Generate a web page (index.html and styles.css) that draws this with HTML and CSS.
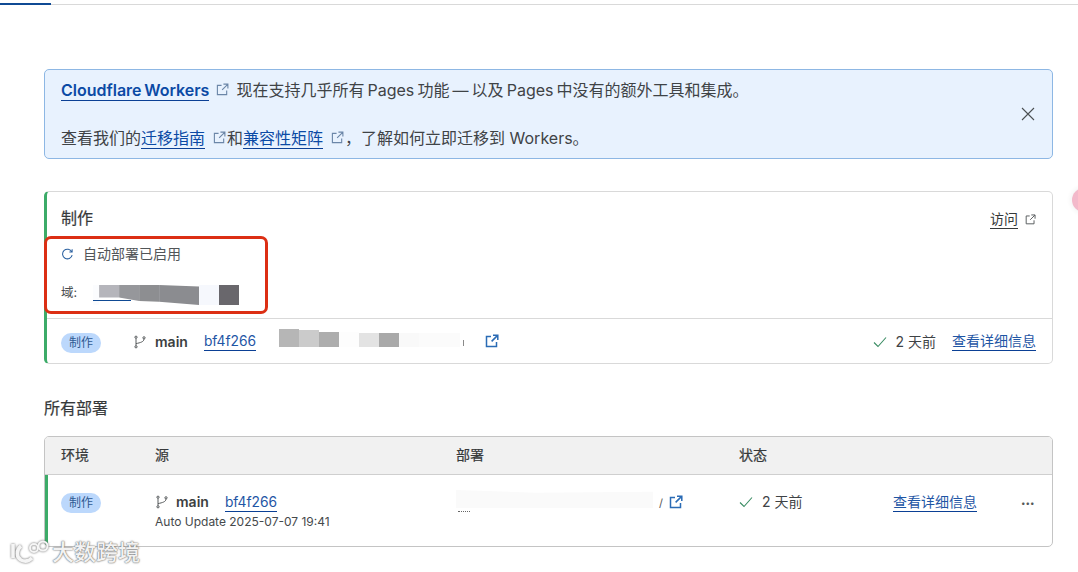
FILE: index.html
```html
<!DOCTYPE html>
<html lang="zh-CN">
<head>
<meta charset="utf-8">
<title>Pages</title>
<link rel="stylesheet" href="styles.css">
</head>
<body>
<svg width="0" height="0" class="defs">
  <symbol id="ext" viewBox="0 0 14 14"><path d="M6 2.5H1.5v10h10V8M8 1.2h4.8V6M12.6 1.4 6.6 7.4" fill="none" stroke="currentColor"/></symbol>
  <symbol id="branch" viewBox="0 0 14 14"><g fill="none" stroke="currentColor" stroke-width="1"><circle cx="3" cy="2.2" r="1.1"/><circle cx="3" cy="11.8" r="1.1"/><circle cx="11" cy="2.8" r="1.1"/><path d="M3 3.3v7.4M11 3.9c0 3-3.5 3.6-8 4.8"/></g></symbol>
  <symbol id="check" viewBox="0 0 14 14"><path d="M1 7.5 5 11.5 13 2.5" fill="none" stroke="currentColor" stroke-width="1.1"/></symbol>
</svg>
<div class="tabs"><span class="tab-active"></span></div>
<main class="page">
  <section class="banner">
    <div class="banner-text">
      <p class="banner-line"><a class="link strong" href="#">Cloudflare Workers</a><svg class="ext ext-light ext-first"><use href="#ext"/></svg>现在支持几乎所有 Pages 功能 — 以及 Pages 中没有的额外工具和集成。</p>
      <p class="banner-line line-two">查看我们的<a class="link" href="#">迁移指南</a><svg class="ext ext-light"><use href="#ext"/></svg>和<a class="link" href="#">兼容性矩阵</a><svg class="ext ext-light"><use href="#ext"/></svg>，了解如何立即迁移到 Workers。</p>
    </div>
    <svg class="close" viewBox="0 0 14 14"><path d="M1 1 13 13M13 1 1 13" fill="none" stroke="currentColor" stroke-width="1.1"/></svg>
  </section>

  <section class="prod-card">
    <div class="prod-top">
      <div>
        <h2 class="prod-title">制作</h2>
        <div class="auto"><svg class="refresh" viewBox="0 0 14 14"><path d="M11.6 4.2A5.2 5.2 0 1 0 12 7.6M12 1.4v3h-3" fill="none" stroke="currentColor" stroke-width="1.1"/></svg>自动部署已启用</div>
        <div class="domain"><span>域:</span>
          <span class="smudge-wrap">
            <span class="smudge s1"></span><span class="smudge s2"></span><span class="smudge s3"></span><span class="smudge s4"></span><span class="smudge s5"></span><span class="smudge s6"></span><span class="smudge s7"></span>
          </span>
        </div>
      </div>
      <div class="visit"><span class="visit-link">访问</span><svg class="ext ext-small"><use href="#ext"/></svg></div>
    </div>
    <div class="prod-row">
      <span class="badge">制作</span>
      <span class="source"><svg class="branch"><use href="#branch"/></svg><b class="main-name">main</b><a class="link commit" href="#">bf4f266</a></span>
      <span class="patches">
        <span class="p p1"></span><span class="p p2"></span><span class="p p3"></span><span class="p p4"></span><span class="p p5"></span><span class="p p6"></span><span class="p p7"></span><span class="p p8"></span><span class="p p9"></span>
      </span>
      <svg class="ext ext-blue"><use href="#ext"/></svg>
      <span class="status"><svg class="check"><use href="#check"/></svg>2 天前</span>
      <a class="link details" href="#">查看详细信息</a>
    </div>
    <div class="highlight"></div>
  </section>

  <h2 class="section-title">所有部署</h2>

  <section class="table">
    <div class="thead">
      <span class="col-env">环境</span>
      <span class="col-src">源</span>
      <span class="col-dep">部署</span>
      <span class="col-status">状态</span>
    </div>
    <div class="tbody">
      <span class="col-env"><span class="badge">制作</span></span>
      <div class="col-src">
        <div class="src-main"><svg class="branch"><use href="#branch"/></svg><b class="main-name">main</b><a class="link commit" href="#">bf4f266</a></div>
        <div class="src-sub">Auto Update 2025-07-07 19:41</div>
      </div>
      <div class="col-dep dep-cell"><span class="dep-blur"></span><span class="slash">/</span><svg class="ext ext-blue"><use href="#ext"/></svg></div>
      <div class="col-status status"><svg class="check"><use href="#check"/></svg>2 天前</div>
      <a class="link details-t" href="#">查看详细信息</a>
      <span class="more">•••</span>
    </div>
  </section>
</main>
<div class="pink-dot"></div>
<div class="watermark"><svg class="wm-logo" viewBox="0 0 48 28"><g fill="none" stroke="currentColor"><path d="M5 6v14" stroke-width="3.6"/><path d="M13 8c-5 4-5 11 0 14 4 2 8 1 11-2" stroke-width="3.6"/><circle cx="26" cy="10" r="4" stroke-width="2"/><circle cx="35" cy="8" r="4.5" stroke-width="2"/></g></svg><span>大数跨境</span></div>
</body>
</html>
```
FILE: styles.css
```css
* { box-sizing: border-box; }
html, body { margin: 0; padding: 0; }
body {
  width: 1078px;
  height: 572px;
  overflow: hidden;
  position: relative;
  background: #fff;
  color: #36393a;
  font-family: Inter, "Noto Sans CJK SC", sans-serif;
  font-size: 14px;
}
.defs { position: absolute; }
p, h2 { margin: 0; }
.tabs { height: 5px; border-bottom: 1px solid #d9d9d9; }
.tab-active { display: block; width: 51px; height: 5px; border-bottom: 2px solid #0f4a94; }
.page { padding: 64px 25px 0 44px; }

.link { color: #0b4aa5; text-decoration: none; border-bottom: 1px solid #0b4095; }
.strong { font-weight: 600; }
.ext { display: inline-block; width: 14px; height: 14px; stroke-width: 1.2; }
.ext-light { color: #6b86a8; width: 13px; height: 13px; margin: 0 1px 0 8px; vertical-align: 0; }
.ext-first { margin: 0 7px 0 7px; }
.ext-small { color: #54585a; width: 11px; height: 11px; margin-left: 7px; }
.ext-blue { color: #2a6bb5; width: 14px; height: 14px; stroke-width: 1.5; }

.banner {
  height: 90px;
  display: flex;
  justify-content: space-between;
  align-items: center;
  padding: 0 17px 0 16px;
  background: #e8f2fe;
  border: 1px solid #8db7e4;
  border-radius: 5px;
}
.banner-text { display: flex; flex-direction: column; gap: 28px; padding-top: 2px; }
.banner-line { font-size: 16px; line-height: 21px; margin-top: -1px; color: #3f4346; white-space: nowrap; word-spacing: -1.4px; }
.line-two { word-spacing: 0; }
.close { width: 14px; height: 14px; color: #4b4f52; }

.prod-card {
  position: relative;
  margin-top: 32px;
  height: 173px;
  border: 1px solid #d9d9d9;
  border-left: 3px solid #3cab68;
  border-radius: 5px;
}
.prod-top {
  height: 127px;
  padding: 16px 16px 0 14px;
  display: flex;
  justify-content: space-between;
  align-items: flex-start;
  border-bottom: 1px solid #d9d9d9;
}
.prod-title { font-size: 16px; font-weight: 400; line-height: 20px; color: #36393a; -webkit-text-stroke: .2px #36393a; }
.auto { display: flex; align-items: center; margin-top: 17px; font-size: 14px; line-height: 18px; color: #515558; }
.refresh { width: 13px; height: 13px; color: #285f9f; margin-right: 9px; }
.domain { display: flex; align-items: flex-start; margin-top: 20px; font-size: 12.5px; line-height: 20px; color: #4a4e51; }
.smudge-wrap { display: flex; margin: 2px 0 0 16px; height: 20px; position: relative; }
.smudge { display: block; height: 20px; width: 20px; }
.s1 { width: 6px; background: #fbfcfe; }
.s2 { background: #b5b5bb; clip-path: polygon(0 0,100% 0,100% 62%,0 62%); }
.s3 { background: #96979b; clip-path: polygon(0 0,100% 0,100% 80%,0 62%); }
.s4 { background: #8d8e91; clip-path: polygon(0 0,100% 0,100% 84%,0 80%); }
.s5 { width: 40px; background: #8b8c90; clip-path: polygon(0 0,100% 8%,100% 100%,0 84%); }
.s6 { background: #f6f8fd; }
.s7 { background: #69676c; }
.smudge-wrap::after { content: ""; position: absolute; left: 0; top: 15px; width: 38px; border-bottom: 1px solid #0f4a94; }
.visit { display: flex; align-items: center; margin-top: 2px; line-height: 18px; font-size: 14px; color: #36393a; }
.visit-link { border-bottom: 1px solid #36393a; }

.prod-row { height: 45px; padding: 0 16px 0 14px; display: flex; align-items: center; }
.badge {
  display: inline-flex; align-items: center; justify-content: center;
  width: 40px; height: 20px; border-radius: 10px;
  background: #bcd8fc; color: #2f5a92; font-size: 12px; line-height: 20px;
}
.prod-row .badge { margin-top: 2px; }
.source { display: flex; align-items: center; margin-left: 32px; }
.branch { width: 14px; height: 14px; color: #565a5c; margin-right: 8px; }
.main-name { font-weight: 600; font-size: 14px; color: #3c3f41; }
.commit { margin-left: 16px; font-size: 13.8px; line-height: 18px; color: #1f56a5; }
.patches { display: flex; margin-left: 23px; height: 18px; width: 206px; margin-top: -8px; }
.p { display: block; height: 14px; width: 20px; margin-top: 4px; }
.p1 { height: 18px; margin-top: 0; background: #b6b6b6; }
.p2 { height: 17px; margin-top: 1px; background: #cbcbcb; }
.p3 { height: 15px; margin-top: 3px; background: #adadad; }
.p4 { height: 15px; margin-top: 3px; background: #fdfdfd; }
.p5 { background: #e3e3e3; }
.p6 { background: #a9a9a9; }
.p7 { background: #f9f9f9; }
.p8 { width: 41px; background: #fbfbfb; }
.p9 { width: 1px; height: 6px; margin: 11px 0 0 3px; background: #8a8a8a; }
.prod-row .ext-blue { margin-top: -1px; }
.status { display: flex; align-items: center; color: #3f4346; line-height: 20px; }
.prod-row .status { margin-left: auto; }
.check { width: 14px; height: 14px; color: #3a8c63; margin-right: 9px; }
.details { margin-left: 16px; line-height: 18px; color: #1f56a5; }
.highlight {
  position: absolute; left: -3px; top: 44px;
  width: 224px; height: 78px;
  border: 3px solid #dc2f14;
  border-radius: 7px;
}

.section-title { margin-top: 34px; font-size: 16px; font-weight: 400; line-height: 20px; color: #36393a; -webkit-text-stroke: .2px #36393a; }
.table {
  margin-top: 18px;
  height: 111px;
  border: 1px solid #c4c4c4;
  border-radius: 5px;
  overflow: hidden;
}
.thead {
  display: flex; align-items: center; height: 38px; padding-bottom: 3px;
  background: #f1f1f1;
  border-bottom: 1px solid #cfcfcf;
  font-size: 14px; font-weight: 400; color: #36393a; -webkit-text-stroke: .2px #36393a;
}
.col-env { width: 110px; padding-left: 16px; flex: none; }
.col-src { width: 301px; flex: none; }
.col-dep { width: 283px; flex: none; }
.col-status { width: 154px; flex: none; }
.tbody {
  position: relative;
  display: flex; align-items: flex-start;
  height: 72px; padding-top: 18px;
  border-left: 3px solid #3cab68;
}
.tbody .col-env { width: 107px; padding-left: 13px; }
.src-main { display: flex; align-items: center; line-height: 20px; margin-top: -1px; }
.src-main .branch { margin-right: 7px; }
.src-sub { font-size: 12px; line-height: 16px; margin-top: 2px; color: #45494b; }
.dep-cell { display: flex; align-items: center; height: 20px; }
.dep-blur { display: block; width: 197px; height: 18px; margin-top: -8px; background: #fafafa; clip-path: polygon(0 0,40% 15%,100% 10%,100% 100%,0 100%); }
.dep-cell::before { content: ""; width: 12px; height: 2px; margin: 14px -14px 0 2px; border-bottom: 1px dotted #666; position: relative; z-index: 1; }
.slash { margin-left: 6px; font-size: 11px; color: #555; width: 6px; }
.dep-cell .ext-blue { margin-left: 4px; margin-top: -3px; }
.tbody .status { color: #3f4346; margin-top: -1px; }
.details-t { line-height: 18px; color: #1f56a5; height: 19px; }
.more { margin-left: 44px; font-size: 8px; line-height: 20px; color: #55595b; }

.pink-dot {
  position: absolute; left: 1072px; top: 188px;
  width: 24px; height: 24px; border-radius: 50%;
  background: #f3b9ca; box-shadow: 0 0 4px 2px #f5f5f5;
}
.watermark {
  position: absolute; left: 8px; top: 537px;
  display: flex; align-items: center;
  color: #f2f2f2;
  font-size: 22px; font-weight: 500; line-height: 30px;
  text-shadow: 0 0 2px #666, 0 0 1px #777;
}
.wm-logo { width: 48px; height: 28px; margin-right: -4px; color: #f5f5f5; filter: drop-shadow(0 0 1px #666); }
```
